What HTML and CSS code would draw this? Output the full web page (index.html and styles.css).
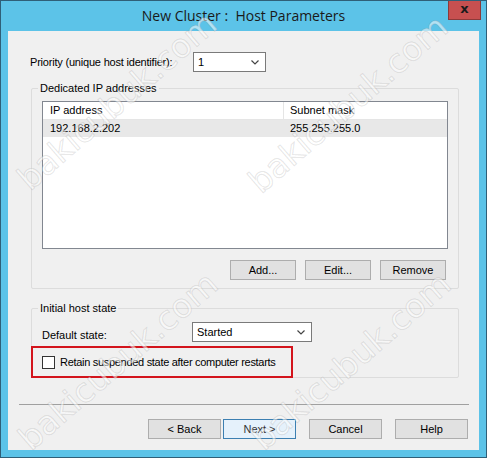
FILE: index.html
```html
<!DOCTYPE html>
<html lang="en">
<head>
  <meta charset="UTF-8">
  <title>New Cluster : Host Parameters</title>
  <link rel="stylesheet" href="styles.css">
</head>
<body>

  <div class="window">
    <div class="titlebar">
      <span></span>
      <div class="title">New Cluster :&nbsp; Host Parameters</div>
      <div class="close">x</div>
    </div>

    <div class="client">
      <div class="priority-row">
        <label class="priority-label">Priority (unique host identifier):</label>
        <div class="select select-priority">
          <span>1</span>
          <svg class="chevron" width="8" height="5" viewBox="0 0 8 5"><polyline points="0.5,0.5 4,4 7.5,0.5" fill="none" stroke="#444" stroke-width="1.2"/></svg>
        </div>
      </div>

      <div class="group group-ip">
        <div class="group-title">Dedicated IP addresses</div>
        <div class="listbox">
          <div class="list-row list-head">
            <div class="col col-ip">IP address</div>
            <div class="col col-mask">Subnet mask</div>
          </div>
          <div class="list-row list-item">
            <div class="col col-ip">192.168.2.202</div>
            <div class="col col-mask">255.255.255.0</div>
          </div>
        </div>
        <div class="group-buttons">
          <button class="btn btn-small">Add...</button>
          <button class="btn btn-small">Edit...</button>
          <button class="btn btn-small">Remove</button>
        </div>
      </div>

      <div class="group group-state">
        <div class="group-title">Initial host state</div>
        <div class="state-row">
          <label class="state-label">Default state:</label>
          <div class="select select-state">
            <span>Started</span>
            <svg class="chevron" width="8" height="5" viewBox="0 0 8 5"><polyline points="0.5,0.5 4,4 7.5,0.5" fill="none" stroke="#444" stroke-width="1.2"/></svg>
          </div>
        </div>
        <div class="check-row">
          <span class="checkbox"></span>
          <span class="check-label">Retain suspended state after computer restarts</span>
        </div>
      </div>

      <div class="separator"></div>

      <div class="wizard-buttons">
        <button class="btn btn-wide btn-back">&lt; Back</button>
        <button class="btn btn-wide btn-default">Next &gt;</button>
        <button class="btn btn-wide btn-cancel">Cancel</button>
        <button class="btn btn-wide">Help</button>
      </div>
    </div>

    <!-- site watermark laid over the screenshot -->
    <div class="watermarks">
      <span class="wm wm-1">bakicubuk.com</span>
      <span class="wm wm-2">bakicubuk.com</span>
      <span class="wm wm-3">bakicubuk.com</span>
      <span class="wm wm-4">bakicubuk.com</span>
    </div>
  </div>

</body>
</html>
```

FILE: styles.css
```css
body { margin: 0; font-family: "Liberation Sans", Arial, sans-serif; font-size: 11px; color: #000; }

.window { position: relative; width: 487px; height: 458px; box-sizing: border-box; border: 1px solid #2f5f78; background: #5cc3e8; overflow: hidden; }

.titlebar { display: grid; grid-template-columns: 1fr auto 1fr; height: 30px; }
.title { font-family: "Open Sans", sans-serif; font-size: 14px; line-height: 30px; color: #1a1a1a; }
.close { justify-self: end; align-self: start; width: 33px; height: 20px; box-sizing: border-box; margin-top: -1px; margin-right: 5px; background: #c75050; border: 1px solid #8c3a3a; border-top: none; text-align: center; font-family: "DejaVu Sans", sans-serif; font-weight: bold; font-size: 13px; line-height: 17px; color: #1b1b1b; }

.client { height: 419px; margin: 0 7px 0 7px; background: #f0f0f0; overflow: hidden; }

.priority-row { display: flex; align-items: center; padding: 21px 0 0 22px; letter-spacing: -0.2px; }
.priority-label { width: 163px; }

.select { display: flex; align-items: center; justify-content: space-between; height: 20px; box-sizing: border-box; padding: 0 6px 0 4px; background: #fff; border: 1px solid #7a7a7a; letter-spacing: 0; }
.select-priority { width: 73px; }
.select-state { width: 120px; }

.group { width: 428px; box-sizing: border-box; margin-left: 23px; border: 1px solid #dcdcdc; border-radius: 2px; }
.group-title { width: fit-content; margin: -7px 0 0 6px; padding: 0 2px; background: #f0f0f0; line-height: 13px; }

.group-ip { height: 201px; margin-top: 16px; }
.listbox { width: 406px; height: 148px; box-sizing: border-box; margin: 6px 0 0 10px; background: #fff; border: 1px solid #828790; }
.list-row { display: flex; height: 17px; line-height: 17px; }
.list-head { border-bottom: 1px solid #e5e5e5; }
.list-head .col-ip { border-right: 1px solid #e5e5e5; }
.list-item { background: #e8e8e8; }
.col-ip { width: 241px; padding-left: 7px; box-sizing: border-box; }
.col-mask { padding-left: 6px; }

.group-buttons { display: flex; justify-content: flex-end; gap: 9px; margin: 11px 12px 0 0; }

.btn { height: 20px; box-sizing: border-box; padding: 0; background: #e1e1e1; border: 1px solid #adadad; font-family: "Liberation Sans", Arial, sans-serif; font-size: 11px; color: #000; }
.btn-small { width: 66px; }

.group-state { height: 70px; margin-top: 19px; }
.state-row { display: flex; align-items: center; margin: 7px 0 0 10px; }
.state-label { width: 150px; padding-top: 5px; }

.check-row { display: flex; align-items: center; gap: 5px; width: 262px; height: 32px; box-sizing: border-box; margin: 4px 0 0 -1px; padding-left: 9px; border: 2px solid #d3141c; }
.checkbox { width: 13px; height: 13px; box-sizing: border-box; background: #fff; border: 1px solid #333; }
.check-label { white-space: nowrap; letter-spacing: -0.3px; }

.separator { height: 1px; width: 450px; margin: 26px 0 0 11px; background: #a0a0a0; }

.wizard-buttons { display: flex; justify-content: flex-end; margin: 14px 11px 0 0; }
.btn-wide { width: 73px; }
.btn-back { margin-right: 2px; }
.btn-default { margin-right: 13px; border-color: #3c7fb1; background: #e5f1fb; color: #333; }
.btn-cancel { margin-right: 13px; }

.watermarks { position: absolute; inset: 0; pointer-events: none; }
.wm { position: absolute; transform: translate(-50%, -50%) rotate(-41deg); font-family: "DejaVu Sans", sans-serif; font-size: 33px; color: rgba(255, 255, 255, 0.55); -webkit-text-stroke: 1px rgba(110, 110, 110, 0.18); white-space: nowrap; }
.wm-1 { left: 116px; top: 100px; }
.wm-2 { left: 347px; top: 103px; }
.wm-3 { left: 117px; top: 360px; }
.wm-4 { left: 350px; top: 360px; }
```
